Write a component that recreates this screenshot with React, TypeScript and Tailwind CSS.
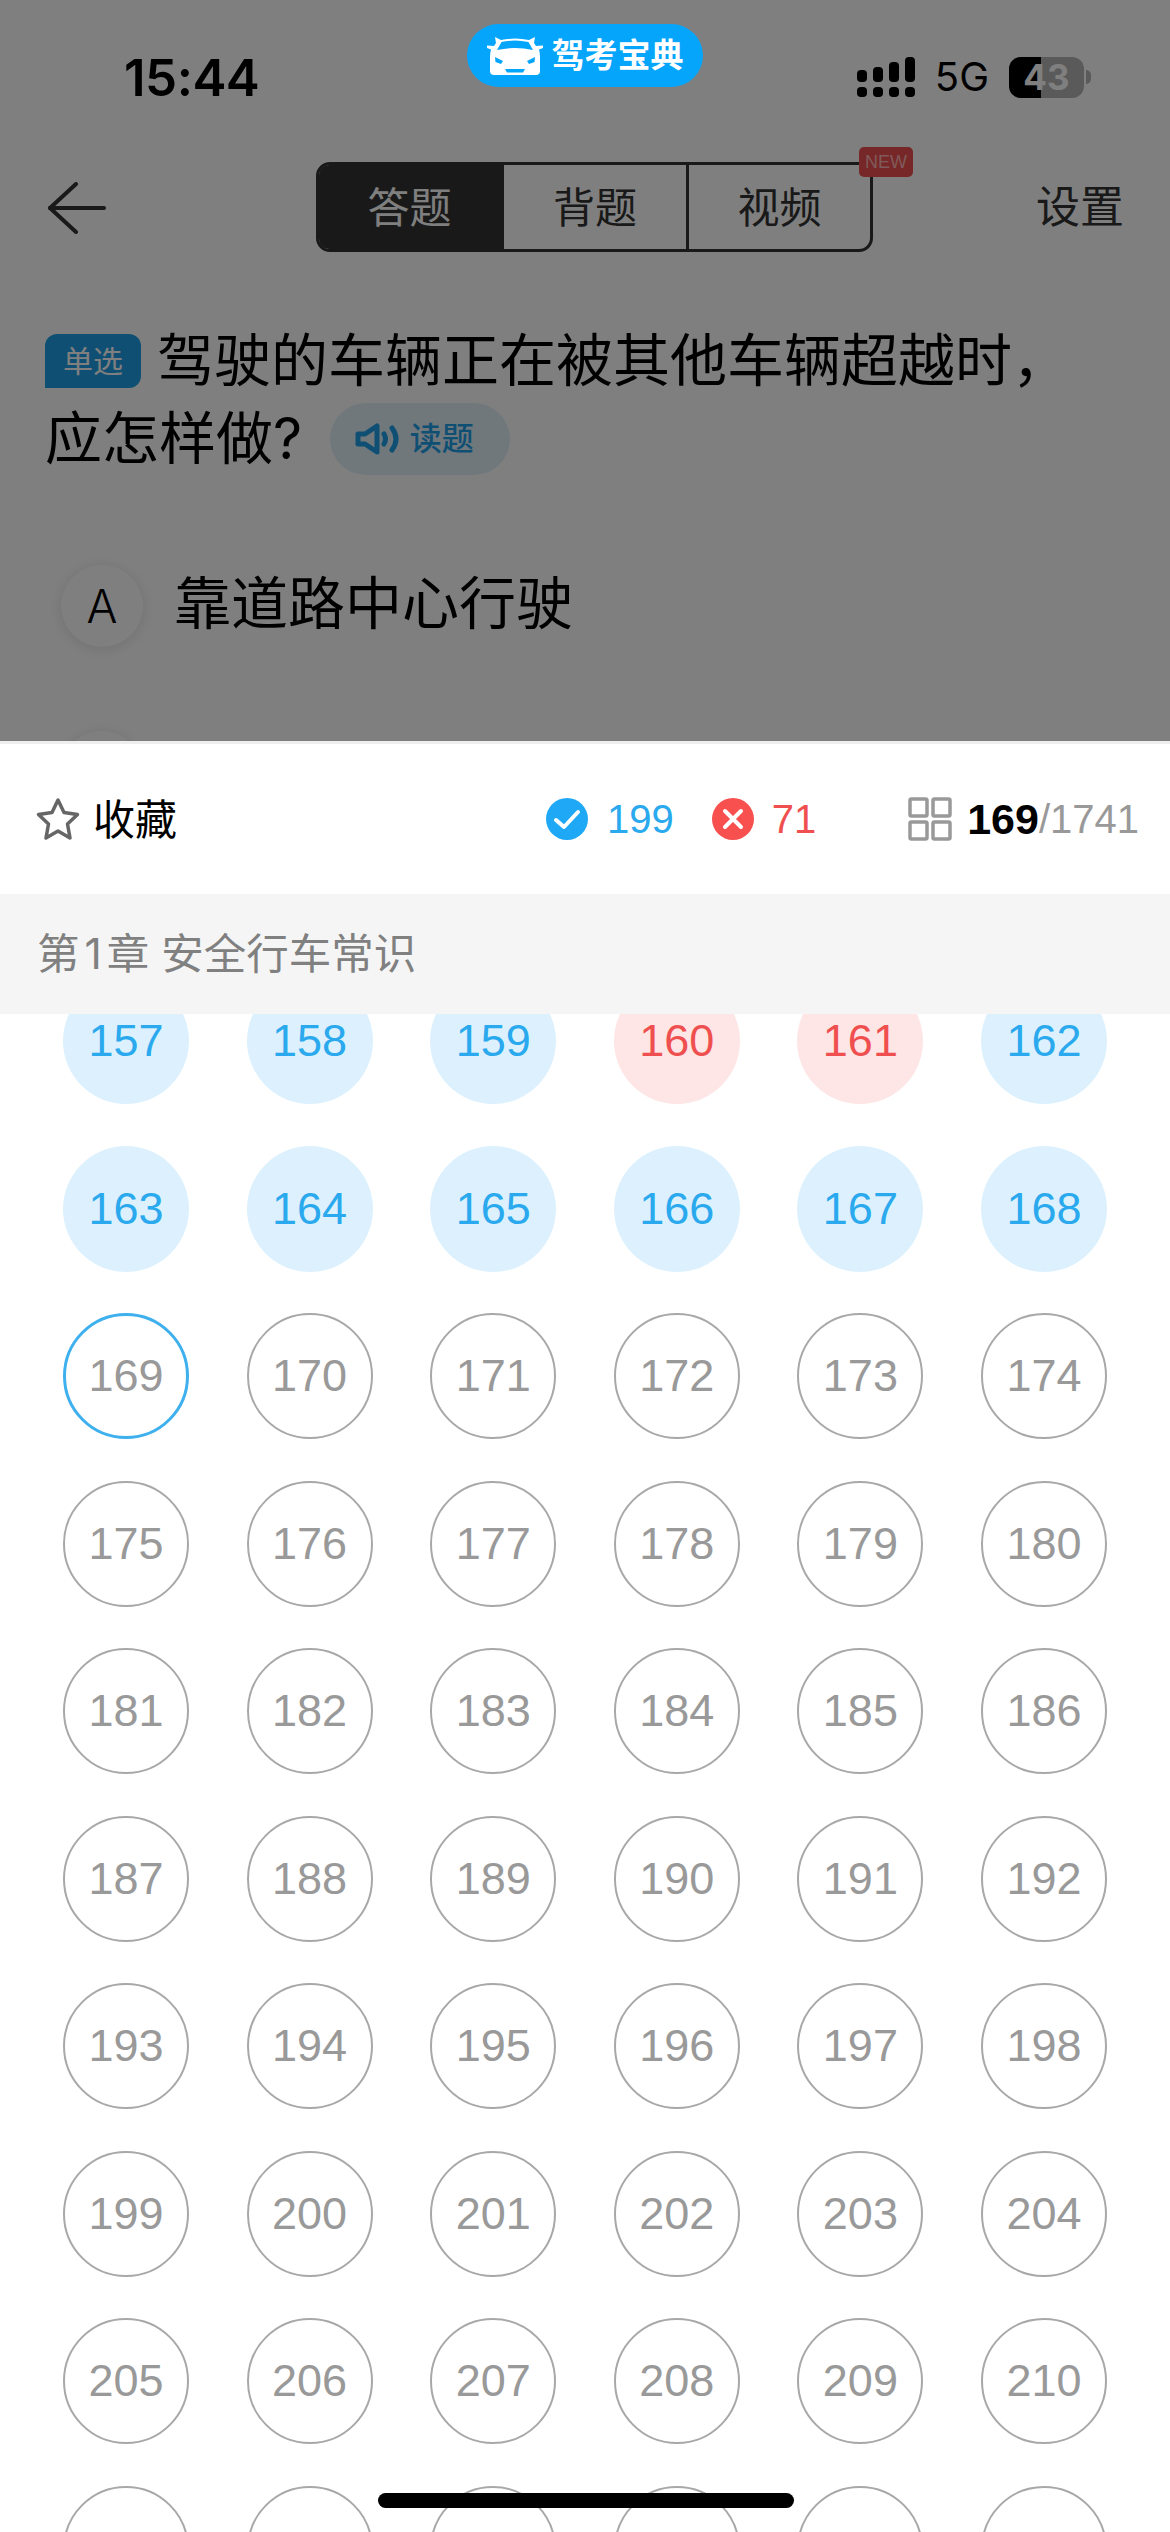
const SANS = "font-['Inter','Noto_Sans_CJK_SC',sans-serif]";
const DIGITS = "font-['Liberation_Sans','Noto_Sans_CJK_SC',sans-serif]";

type CellState = 'done' | 'wrong' | 'current' | 'todo';

function cellState(n: number): CellState {
  if (n === 160 || n === 161) return 'wrong';
  if (n < 169) return 'done';
  if (n === 169) return 'current';
  return 'todo';
}

const CELL_STYLES: Record<CellState, string> = {
  done: 'bg-[#dcf1fd] text-[#2aa9ee]',
  wrong: 'bg-[#fde6e5] text-[#f04f4f]',
  current: 'border-[3px] border-[#3fb0ee] text-[#999999]',
  todo: 'border-2 border-[#a8a8a8] text-[#999999]',
};

// 157..216, the last row is cut off by the bottom of the screen
const NUMBERS = Array.from({ length: 60 }, (_, i) => 157 + i);

function Cell({ n }: { n: number }) {
  const state = cellState(n);
  return (
    <div
      className={`flex h-[126px] w-[126px] items-center justify-center rounded-full text-[45px] ${DIGITS} ${CELL_STYLES[state]}`}
    >
      {n}
    </div>
  );
}

function SignalIcon() {
  return (
    <svg width="58" height="40" viewBox="0 0 58 40" fill="#000">
      <rect x="0" y="30" width="10" height="10" rx="4" />
      <rect x="16" y="30" width="10" height="10" rx="4" />
      <rect x="32" y="30" width="10" height="10" rx="4" />
      <rect x="48" y="30" width="10" height="10" rx="4" />
      <rect x="0" y="13" width="10" height="12" rx="4" />
      <rect x="16" y="10" width="10" height="15" rx="4" />
      <rect x="32" y="5" width="10" height="20" rx="4" />
      <rect x="48" y="0" width="10" height="25" rx="4" />
    </svg>
  );
}

function CarLogo() {
  return (
    <svg width="56" height="38" viewBox="0 0 56 38">
      <path
        d="M8 0 L14 3 Q28 0 42 3 L48 0 L47 6 L49 9 L56 8.5 L56 11 L52 12.5 Q53 16 53 20 L53 34 Q53 38 49 38 L7 38 Q3 38 3 34 L3 20 Q3 16 4 12.5 L0 11 L0 8.5 L7 9 L9 6 Z"
        fill="#fff"
      />
      <path d="M14.5 5 Q28 2 41.5 5 L46 13 Q28 9 10 13 Z" fill="#05a5fb" />
      <path d="M8 20 L16 24 L14 27 L8.5 25 Z" fill="#05a5fb" />
      <path d="M48 20 L40 24 L42 27 L47.5 25 Z" fill="#05a5fb" />
      <path d="M18 32 L38 32 L36 35.5 L20 35.5 Z" fill="#05a5fb" />
    </svg>
  );
}

function SpeakerIcon() {
  return (
    <svg width="45" height="32" viewBox="0 0 45 32" fill="none" stroke="#1e9ee6" strokeWidth="5">
      <path d="M3 11 L10 11 L22 3 L22 29 L10 21 L3 21 Z" strokeLinejoin="round" />
      <path d="M29 11 Q32 16 29 21" strokeLinecap="round" />
      <path d="M37 5 Q45 16 37 27" strokeLinecap="round" />
    </svg>
  );
}

function OptionRow({ letter, text, className }: { letter: string; text: string; className?: string }) {
  return (
    <div className={`flex items-center ${className ?? ''}`}>
      <div className="flex h-[82px] w-[82px] items-center justify-center rounded-full bg-white text-[46px] font-light text-black shadow-[0_2px_14px_rgba(0,0,0,0.12)]">
        {letter}
      </div>
      <span className="ml-[31px] pb-[4px] text-[57px] leading-[82px] text-black">{text}</span>
    </div>
  );
}

function Question() {
  return (
    <div className="relative h-[741px] shrink-0 overflow-hidden bg-white">
      {/* status bar */}
      <div className="flex h-[120px] items-center pl-[124px] pr-[79px] pt-[34px]">
        <span className="text-[51px] font-semibold leading-none tracking-[-0.5px] text-black">15:44</span>
        <div className="ml-auto flex items-center">
          <SignalIcon />
          <span className="ml-[20px] text-[40px] leading-none text-black">5G</span>
          <div className="relative ml-[20px] flex h-[41px] w-[75px] items-center justify-center rounded-[12px] bg-[#b4b4b4] text-[35px] font-bold leading-none text-white">
            <div className="absolute inset-y-0 left-0 w-[32px] rounded-l-[12px] bg-black" />
            <span className="relative">43</span>
          </div>
          <div className="ml-[2px] h-[14px] w-[5px] rounded-r-full bg-[#b4b4b4]" />
        </div>
      </div>

      {/* nav bar */}
      <div className="mt-[42px] flex h-[90px] items-center pl-[48px] pr-[46px]">
        <svg className="mt-[2px]" width="58" height="52" viewBox="0 0 58 52" fill="none" stroke="#333" strokeWidth="4" strokeLinecap="round" strokeLinejoin="round">
          <path d="M28 2 L2 26 L28 50" />
          <path d="M2 26 L56 26" />
        </svg>
        <div className="relative ml-[210px] flex h-[90px] w-[557px] rounded-[14px] border-[3px] border-[#333] text-[42px] text-[#333]">
          <div className="flex w-[185px] items-center justify-center rounded-l-[10px] bg-[#333] pr-[4px] text-white">答题</div>
          <div className="flex w-[185px] items-center justify-center border-r-[3px] border-[#333]">背题</div>
          <div className="flex flex-1 items-center justify-center">视频</div>
          <div className={`absolute right-[-43px] top-[-18px] flex h-[30px] w-[54px] items-center justify-center rounded-[5px] bg-[#ef4f4f] text-[18px] leading-none text-[#ffb4b4] ${DIGITS}`}>
            NEW
          </div>
        </div>
        <span className="ml-auto text-[44px] text-[#333]">设置</span>
      </div>

      {/* question */}
      <div className="mt-[70px] pl-[45px] text-[57px] leading-[78px] text-black">
        <div className="flex items-center">
          <span className="flex h-[54px] w-[96px] items-center justify-center rounded-[12px] rounded-bl-none bg-[#1e9ee6] text-[30px] leading-none text-white">
            单选
          </span>
          <span className="ml-[16px] whitespace-nowrap">驾驶的车辆正在被其他车辆超越时，</span>
        </div>
        <div className="flex items-center">
          <span className="whitespace-nowrap">应怎样做?</span>
          <span className="ml-[28px] flex h-[72px] w-[180px] items-center justify-center rounded-full bg-[#e0f0f9] pr-[12px] text-[32px] font-medium leading-none text-[#1e9ee6]">
            <SpeakerIcon />
            <span className="ml-[10px]">读题</span>
          </span>
        </div>
      </div>

      {/* options */}
      <OptionRow letter="A" text="靠道路中心行驶" className="ml-[61px] mt-[85px]" />
      <OptionRow letter="B" text="加速行驶" className="ml-[61px] mt-[80px]" />

      {/* dim layer of the sheet */}
      <div className="absolute inset-0 bg-black/50" />

      {/* app badge of the recording screen, sits above the dim layer */}
      <div className="absolute left-[467px] top-[24px] flex h-[63px] w-[236px] items-center justify-center rounded-full bg-[#05a5fb]">
        <CarLogo />
        <span className="ml-[9px] text-[33px] font-bold leading-none text-white">驾考宝典</span>
      </div>
    </div>
  );
}

function SheetHeader() {
  return (
    <div className="flex h-[153px] shrink-0 items-center border-t-[3px] border-[#eeeeee] pl-[36px] pr-[31px]">
      <svg width="44" height="44" viewBox="0 0 44 44" fill="none" stroke="#666" strokeWidth="3.5" strokeLinejoin="round">
        <path d="M22 3 L28 15.5 L41.5 17.5 L31.5 27 L34 41 L22 34 L10 41 L12.5 27 L2.5 17.5 L16 15.5 Z" />
      </svg>
      <span className="ml-[13px] text-[42px] text-black">收藏</span>

      <svg className="ml-[369px]" width="42" height="42" viewBox="0 0 42 42">
        <circle cx="21" cy="21" r="21" fill="#1fa8f5" />
        <path d="M10 22 L18 29 L32 14" fill="none" stroke="#fff" strokeWidth="4" strokeLinecap="round" strokeLinejoin="round" />
      </svg>
      <span className={`ml-[19px] text-[40px] text-[#2aa9ee] ${DIGITS}`}>199</span>

      <svg className="ml-[38px]" width="42" height="42" viewBox="0 0 42 42">
        <circle cx="21" cy="21" r="21" fill="#f84f4f" />
        <path d="M13 13 L29 29 M29 13 L13 29" fill="none" stroke="#fff" strokeWidth="4" strokeLinecap="round" />
      </svg>
      <span className={`ml-[18px] text-[40px] text-[#f04f4f] ${DIGITS}`}>71</span>

      <svg className="ml-auto" width="44" height="44" viewBox="0 0 44 44" fill="none" stroke="#999" strokeWidth="3.5">
        <rect x="2" y="2" width="17" height="17" rx="1.5" />
        <rect x="25" y="2" width="17" height="17" rx="1.5" />
        <rect x="2" y="25" width="17" height="17" rx="1.5" />
        <rect x="25" y="25" width="17" height="17" rx="1.5" />
      </svg>
      <span className={`ml-[15px] text-[43px] font-bold text-black ${DIGITS}`}>169</span>
      <span className={`text-[40px] text-[#999999] ${DIGITS}`}>/1741</span>
    </div>
  );
}

export default function App() {
  return (
    <div className={`relative flex h-[2532px] w-[1170px] flex-col overflow-hidden bg-white ${SANS}`}>
      <Question />
      <SheetHeader />
      <div className="flex h-[120px] shrink-0 items-center bg-[#f5f5f5] pl-[37px] text-[42.5px] leading-none text-[#808080]">
        <span>
          第<span className="mx-[5px]">1</span>章 安全行车常识
        </span>
      </div>
      <div className="min-h-0 flex-1 overflow-hidden">
        <div className="mt-[-36px] grid grid-cols-[repeat(6,126px)] justify-between gap-y-[41.5px] pl-[63px] pr-[63px]">
          {NUMBERS.map((n) => (
            <Cell key={n} n={n} />
          ))}
        </div>
      </div>
      {/* home indicator */}
      <div className="absolute bottom-[24px] left-[378px] h-[15px] w-[416px] rounded-full bg-black" />
    </div>
  );
}
